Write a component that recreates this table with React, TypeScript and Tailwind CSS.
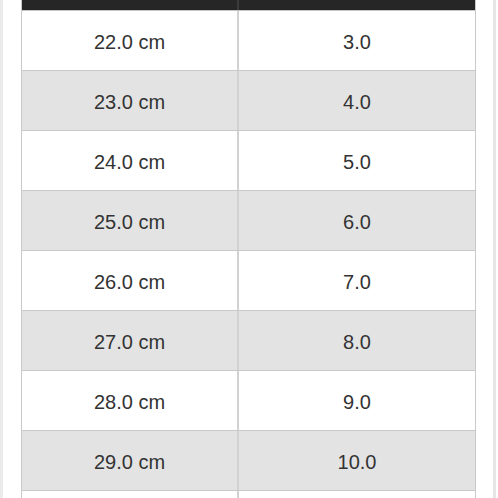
const ROWS: Array<[string, string]> = [
  ['22.0 cm', '3.0'],
  ['23.0 cm', '4.0'],
  ['24.0 cm', '5.0'],
  ['25.0 cm', '6.0'],
  ['26.0 cm', '7.0'],
  ['27.0 cm', '8.0'],
  ['28.0 cm', '9.0'],
  ['29.0 cm', '10.0'],
  ['', ''],
];

export default function App() {
  return (
    <div
      className="flex h-[498px] w-[498px] overflow-hidden bg-white"
      style={{ fontFamily: '"Liberation Sans", Arial, sans-serif' }}
    >
      <div className="w-[3px] shrink-0 bg-[#ebebeb]" />
      <div className="w-[18px] shrink-0 bg-white" />
      <div className="flex w-[455px] shrink-0 flex-col border-x border-[#c9c9c9]">
        <div className="flex h-[11px] shrink-0 border-b border-[#c4c4c4] bg-[#262626]">
          <div className="w-[217px] border-r-2 border-[#3a3a3a]" />
          <div className="flex-1" />
        </div>
        {ROWS.map(([cm, us], i) => (
          <div
            key={i}
            className={`flex h-[60px] shrink-0 border-b border-[#c9c9c9] text-[20px] text-[#333] ${i % 2 ? 'bg-[#e3e3e3]' : 'bg-white'}`}
          >
            <div className="flex w-[217px] items-center justify-center pt-[2px] border-r-2 border-[#d2d2d2]">{cm}</div>
            <div className="flex flex-1 items-center justify-center pt-[2px]">{us}</div>
          </div>
        ))}
      </div>
      <div className="w-[17px] shrink-0 bg-white" />
      <div className="w-[3px] shrink-0 bg-[#e6e6e6]" />
    </div>
  );
}
